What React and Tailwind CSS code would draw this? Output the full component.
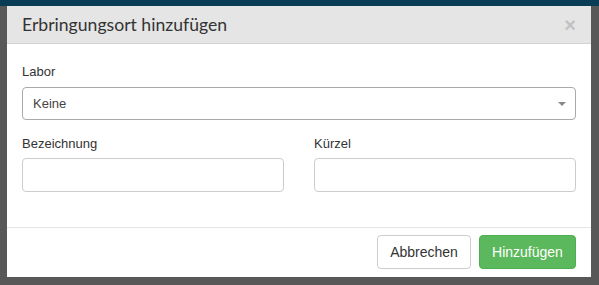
import React from 'react';

const Field = ({ label, className = '' }) => (
  <div className={className}>
    <label className="block h-[19px] leading-[19px] mb-[5px] text-[13px] text-[#333]">{label}</label>
    <input
      type="text"
      className="block w-full h-[34px] px-[10px] border border-[#ccc] rounded-[4px] bg-white text-[13px] outline-none"
    />
  </div>
);

const App = () => {
  return (
    <div className="w-[599px] h-[285px] overflow-hidden bg-[#585858] font-['Liberation_Sans',Arial,sans-serif]">
      {/* top bar behind the overlay */}
      <div className="h-[6px] bg-[#083d55]" />

      {/* Modal */}
      <div className="ml-[7px] w-[584px] bg-white">
        {/* Header */}
        <div className="flex items-center justify-between h-[38px] pl-[15px] pr-[15px] bg-[#e5e5e5] border-b border-[#d2d2d2]">
          <h4 className="text-[17.6px] text-[#333] font-['Lato',sans-serif] leading-none">
            Erbringungsort hinzufügen
          </h4>
          <span className="text-[20px] font-bold leading-none text-[#c2c2c2] font-['Liberation_Sans',Arial,sans-serif]">×</span>
        </div>

        {/* Body */}
        <div className="h-[183px] px-[15px] pt-[18px]">
          <div>
            <label className="block h-[19px] leading-[19px] mb-[6px] text-[13px] text-[#333]">Labor</label>
            <div className="flex items-center justify-between h-[33px] pl-[10px] pr-[8px] border border-[#aaa] rounded-[4px] text-[13px] text-[#444]">
              <span>Keine</span>
              <svg width="8" height="4" viewBox="0 0 8 4" className="mr-[1px]">
                <path d="M0 0h8L4 4z" fill="#888" />
              </svg>
            </div>
          </div>
          <div className="grid grid-cols-2 gap-[30px] mt-[14px]">
            <Field label="Bezeichnung" />
            <Field label="Kürzel" />
          </div>
        </div>

        {/* Footer */}
        <div className="flex justify-end gap-[8px] h-[50px] px-[15px] pt-[7px] border-t border-[#e5e5e5]">
          <button className="h-[34px] w-[94px] border border-[#ccc] rounded-[4px] bg-white text-[14px] text-[#333]">
            Abbrechen
          </button>
          <button className="h-[34px] w-[97px] border border-[#4cae4c] rounded-[4px] bg-[#5cb85c] text-[14px] text-white">
            Hinzufügen
          </button>
        </div>
      </div>
    </div>
  );
};

export default App;
